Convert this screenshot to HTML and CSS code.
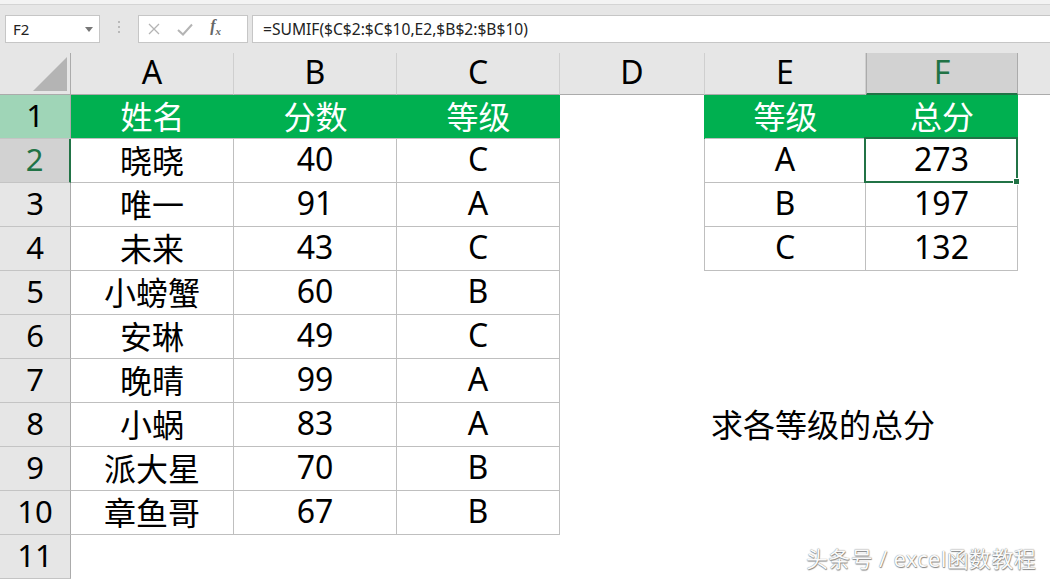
FILE: index.html
```html
<!DOCTYPE html>
<html lang="zh-CN">
<head>
    <meta charset="UTF-8">
    <title>SUMIF</title>
    <link rel="stylesheet" href="styles.css">
</head>
<body>

<div class="app">
    <div class="ribbon-edge"></div>
    <div class="formula-bar">
        <div class="name-box">
            <span>F2</span>
            <svg class="caret" width="8" height="5" viewBox="0 0 8 5"><path d="M0 0H8L4 5Z" fill="#777"/></svg>
        </div>
        <div class="grip">
            <i></i><i></i><i></i>
        </div>
        <div class="fx-box">
            <svg width="12" height="12" viewBox="0 0 12 12"><path d="M1 1L11 11M11 1L1 11" stroke="#b4b4b4" stroke-width="1.3" fill="none"/></svg>
            <svg width="16" height="13" viewBox="0 0 16 13"><path d="M1 7L6 11.5L15 1.5" stroke="#b4b4b4" stroke-width="2" fill="none"/></svg>
            <span class="fx">f<sub>x</sub></span>
        </div>
        <div class="formula">=SUMIF($C$2:$C$10,E2,$B$2:$B$10)</div>
    </div>

    <div class="sheet">
        <!-- column headers -->
        <div class="corner"><div class="tri"></div></div>
        <div class="hd">A</div>
        <div class="hd">B</div>
        <div class="hd">C</div>
        <div class="hd">D</div>
        <div class="hd">E</div>
        <div class="hd active">F</div>
        <div class="hd last"></div>

        <!-- row 1 -->
        <div class="rh hl">1</div>
        <div class="c g">姓名</div>
        <div class="c g">分数</div>
        <div class="c g">等级</div>
        <div class="c edge-g"></div>
        <div class="c g">等级</div>
        <div class="c g">总分</div>
        <div class="c"></div>

        <!-- row 2 -->
        <div class="rh cur">2</div>
        <div class="c t">晓晓</div>
        <div class="c t">40</div>
        <div class="c t">C</div>
        <div class="c t-r"></div>
        <div class="c t">A</div>
        <div class="c t sel">273</div>
        <div class="c"></div>

        <!-- row 3 -->
        <div class="rh">3</div>
        <div class="c t">唯一</div>
        <div class="c t">91</div>
        <div class="c t">A</div>
        <div class="c t-r"></div>
        <div class="c t">B</div>
        <div class="c t">197</div>
        <div class="c"></div>

        <!-- row 4 -->
        <div class="rh">4</div>
        <div class="c t">未来</div>
        <div class="c t">43</div>
        <div class="c t">C</div>
        <div class="c t-r"></div>
        <div class="c t">C</div>
        <div class="c t">132</div>
        <div class="c"></div>

        <!-- row 5 -->
        <div class="rh">5</div>
        <div class="c t">小螃蟹</div>
        <div class="c t">60</div>
        <div class="c t">B</div>
        <div class="c"></div>
        <div class="c"></div>
        <div class="c"></div>
        <div class="c"></div>

        <!-- row 6 -->
        <div class="rh">6</div>
        <div class="c t">安琳</div>
        <div class="c t">49</div>
        <div class="c t">C</div>
        <div class="c"></div>
        <div class="c"></div>
        <div class="c"></div>
        <div class="c"></div>

        <!-- row 7 -->
        <div class="rh">7</div>
        <div class="c t">晚晴</div>
        <div class="c t">99</div>
        <div class="c t">A</div>
        <div class="c"></div>
        <div class="c"></div>
        <div class="c"></div>
        <div class="c"></div>

        <!-- row 8 -->
        <div class="rh">8</div>
        <div class="c t">小蜗</div>
        <div class="c t">83</div>
        <div class="c t">A</div>
        <div class="c"></div>
        <div class="c note">求各等级的总分</div>
        <div class="c"></div>
        <div class="c"></div>

        <!-- row 9 -->
        <div class="rh">9</div>
        <div class="c t">派大星</div>
        <div class="c t">70</div>
        <div class="c t">B</div>
        <div class="c"></div>
        <div class="c"></div>
        <div class="c"></div>
        <div class="c"></div>

        <!-- row 10 -->
        <div class="rh">10</div>
        <div class="c t">章鱼哥</div>
        <div class="c t">67</div>
        <div class="c t">B</div>
        <div class="c"></div>
        <div class="c"></div>
        <div class="c"></div>
        <div class="c"></div>

        <!-- row 11 -->
        <div class="rh">11</div>
        <div class="c"></div>
        <div class="c"></div>
        <div class="c"></div>
        <div class="c"></div>
        <div class="c"></div>
        <div class="c"></div>
        <div class="c"></div>
    </div>

    <div class="watermark">头条号 / excel函数教程</div>
</div>

</body>
</html>
```

FILE: styles.css
```css
body {
    margin: 0;
    background: #fff;
    font-family: "Noto Sans", "Noto Sans CJK SC", sans-serif;
    overflow: hidden;
}
.app {
    position: relative;
    width: 1050px;
    height: 579px;
    overflow: hidden;
}
.ribbon-edge {
    height: 4px;
    background: #f3f3f3;
    border-bottom: 1px solid #d4d4d4;
}
.formula-bar {
    height: 48px;
    box-sizing: border-box;
    background: #e6e6e6;
    display: flex;
    align-items: flex-start;
    padding-top: 10px;
}
.name-box, .fx-box, .formula {
    height: 28px;
    box-sizing: border-box;
    background: #fff;
    border: 1px solid #c6c6c6;
    display: flex;
    align-items: center;
    font-size: 15px;
    color: #222;
}
.name-box {
    width: 95px;
    margin-left: 5px;
    padding: 0 6px 0 7px;
    justify-content: space-between;
}
.grip {
    width: 38px;
    display: flex;
    flex-direction: column;
    align-items: center;
    gap: 3px;
    padding-top: 6px;
}
.grip i {
    width: 2px;
    height: 2px;
    background: #b9b9b9;
}
.fx-box {
    width: 110px;
    padding: 0 26px 0 9px;
    justify-content: space-between;
}
.fx {
    font-family: "Liberation Serif", serif;
    font-style: italic;
    font-weight: bold;
    font-size: 16px;
    color: #666;
    margin-top: -3px;
}
.fx sub {
    font-size: 11px;
}
.formula {
    flex: 1;
    margin-left: 4px;
    margin-right: -2px;
    padding-left: 10px;
    font-size: 15.6px;
}
.sheet {
    display: grid;
    grid-template-columns: 71px 163px 163px 163px 145px 161px 152px 1fr;
    grid-template-rows: 42px repeat(11, 44px);
}
.sheet > div {
    box-sizing: border-box;
    display: flex;
    align-items: center;
    justify-content: center;
    font-size: 32px;
    color: #000;
    white-space: nowrap;
    padding-bottom: 4px;
}
.corner {
    background: #e6e6e6;
    border-right: 1px solid #ababab;
    border-bottom: 1px solid #ababab;
    align-items: flex-end !important;
    justify-content: flex-end !important;
    padding: 0 3px 3px 0 !important;
}
.tri {
    width: 34px;
    height: 34px;
    background: #b4b4b4;
    clip-path: polygon(100% 0, 100% 100%, 0 100%);
}
.hd {
    background: #e6e6e6;
    border-right: 1px solid #cfcfcf;
    border-bottom: 1px solid #ababab;
}
.hd.active {
    background: #d2d2d2;
    color: #217346 !important;
    border-left: 1px solid #ababab;
    border-right: 1px solid #ababab;
    border-bottom: 2px solid #217346;
}
.hd.last {
    border-right: none;
}
.rh {
    background: #e6e6e6;
    border-right: 1px solid #ababab;
    border-bottom: 1px solid #c4c4c4;
    font-size: 31px !important;
}
.rh.hl {
    background: #9fd5b7;
}
.rh.cur {
    background: #d2d2d2;
    color: #217346 !important;
    border-right: 2px solid #217346;
}
.c.g {
    background: #00b050;
    color: #fff;
    border-bottom: 1px solid #bfbfbf;
}
.c.t {
    border-right: 1px solid #bfbfbf;
    border-bottom: 1px solid #bfbfbf;
}
.c.t-r {
    border-right: 1px solid #bfbfbf;
}
.c.edge-g {
    border-right: 1px solid #00b050;
}
.c.sel {
    position: relative;
}
.c.sel::after {
    content: "";
    position: absolute;
    left: -2px;
    top: -2px;
    right: -1px;
    bottom: -1px;
    border: 2px solid #217346;
}
.c.sel::before {
    content: "";
    position: absolute;
    right: -3px;
    bottom: -3px;
    width: 5px;
    height: 5px;
    background: #217346;
    border: 1px solid #fff;
    z-index: 1;
}
.c.note {
    justify-content: flex-start !important;
    padding-left: 6px;
    overflow: visible;
}
.watermark {
    position: absolute;
    right: 14px;
    bottom: 6px;
    font-size: 22px;
    color: #fafafa;
    text-shadow: 0 0 1px #666, 0.5px 0.5px 1px #888;
    letter-spacing: 0.3px;
}
```
